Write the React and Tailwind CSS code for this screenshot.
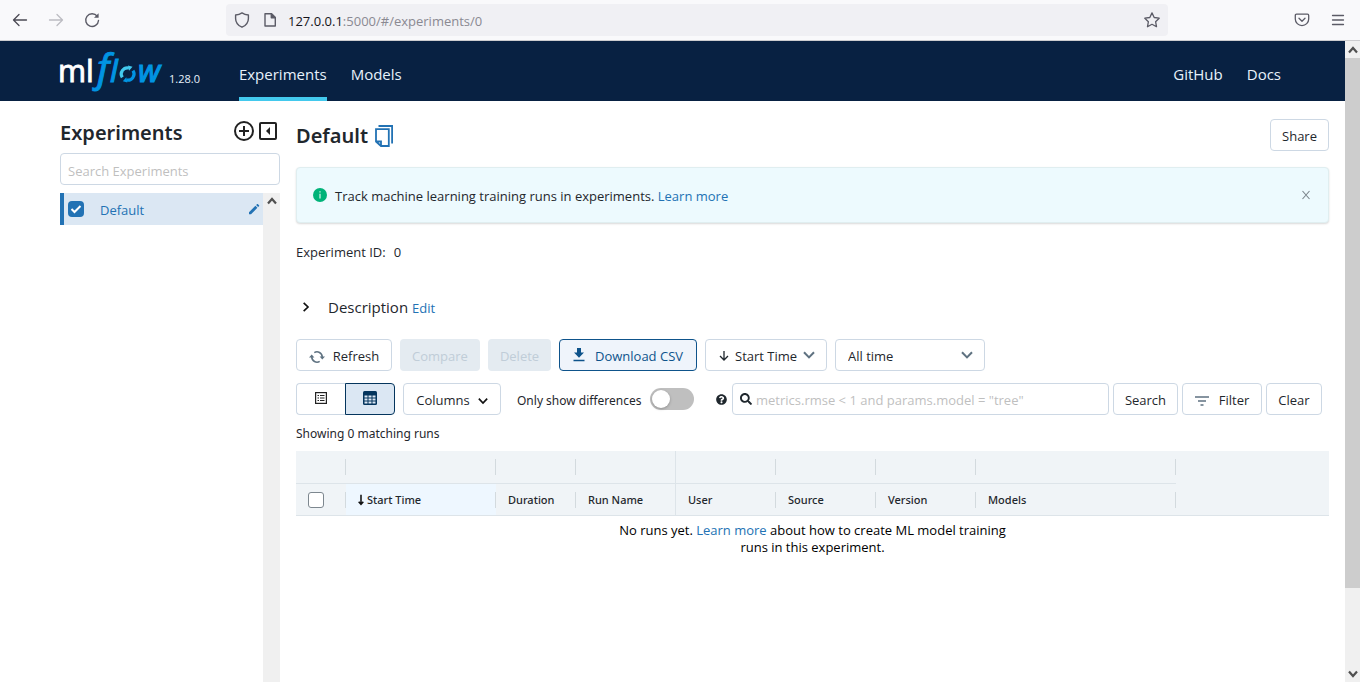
import React from "react";
import { FaQuestionCircle, FaSearch } from "react-icons/fa";

const BUTTON =
  "flex h-8 shrink-0 items-center justify-center rounded border border-[#cdd8e4] bg-white pt-[3px] text-[13px] text-[#1f272d]";

function Chevron({ className }) {
  return (
    <svg viewBox="0 0 12 12" fill="none" stroke="currentColor" className={className} aria-hidden="true">
      <path d="M1 3.2 6 8.4l5-5.2" strokeWidth="2" />
    </svg>
  );
}

function ScrollArrow({ down }) {
  return (
    <svg viewBox="0 0 10 8" className="h-2 w-[10px]" fill="none" stroke="#505050" strokeWidth="2.2" aria-hidden="true">
      <path d={down ? "M1 1.5 5 6l4-4.5" : "M1 6.5 5 2l4 4.5"} />
    </svg>
  );
}

function BrowserBar() {
  return (
    <div className="flex h-[41px] shrink-0 items-center border-b border-[#cccccf] bg-[#f9f9fb] text-[#5b5b66]">
      <div className="flex w-[226px] items-center gap-5 pl-3">
        <button aria-label="Back" className="text-[#4b4a54]">
          <svg viewBox="0 0 16 16" className="size-4" fill="none" stroke="currentColor" strokeWidth="1.3" strokeLinecap="round" strokeLinejoin="round">
            <path d="M14.5 8H1.5M7 2.5 1.5 8 7 13.5" />
          </svg>
        </button>
        <button aria-label="Forward" className="text-[#bcbcc2]">
          <svg viewBox="0 0 16 16" className="size-4" fill="none" stroke="currentColor" strokeWidth="1.3" strokeLinecap="round" strokeLinejoin="round">
            <path d="M1.5 8h13M9 2.5 14.5 8 9 13.5" />
          </svg>
        </button>
        <button aria-label="Reload">
          <svg viewBox="0 0 16 16" className="size-4" fill="none" stroke="currentColor" strokeWidth="1.4" strokeLinecap="round">
            <path d="M13.2 4.2A6.4 6.4 0 1 0 14.5 8.5" />
            <path d="M14.6 1.2v4.6H10z" fill="currentColor" stroke="none" />
          </svg>
        </button>
      </div>
      <div className="flex h-8 flex-1 items-center rounded bg-[#f0f0f4] px-2">
        <svg viewBox="0 0 16 16" className="size-4" fill="none" stroke="currentColor" strokeWidth="1.4" strokeLinejoin="round" aria-hidden="true">
          <path d="M8 .9c1.800 1.300 3.900 2 6.400 2.100v3.400c0 4-2.400 7-6.400 8.800C4 13.400 1.600 10.400 1.600 6.400V3C4.100 2.900 6.200 2.200 8 .9z" />
        </svg>
        <svg viewBox="0 0 16 16" className="ml-3 size-4" fill="none" stroke="currentColor" strokeWidth="1.4" strokeLinejoin="round" aria-hidden="true">
          <path d="M3 1.700h6.500L13.300 5.500V14H3z" />
          <path d="M9.300 1.700v4h4z" fill="currentColor" />
        </svg>
        <div className="ml-[10px] flex-1 pt-[3px] text-[13px]">
          <span className="text-[#15141a]">127.0.0.1</span>
          <span className="text-[#8a8992]">:5000/#/experiments/0</span>
        </div>
        <button aria-label="Bookmark this page">
          <svg viewBox="0 0 16 16" className="size-4" fill="none" stroke="currentColor" strokeWidth="1.3" strokeLinejoin="round">
            <path d="m8 .9 2.200 4.600 5 .7-3.600 3.500.9 5L8 12.300l-4.500 2.400.9-5L.8 6.200l5-.7z" />
          </svg>
        </button>
      </div>
      <div className="flex w-48 items-center justify-end gap-5 pr-[14px]">
        <button aria-label="Save to Pocket">
          <svg viewBox="0 0 16 16" className="size-4" fill="none" stroke="currentColor" strokeWidth="1.3" strokeLinecap="round" strokeLinejoin="round">
            <path d="M2.500 2.200h11c.7 0 1.200.5 1.200 1.200v3.500a6.700 6.700 0 0 1-13.400 0V3.400c0-.7.5-1.200 1.200-1.200zM5 6.300l3 2.900 3-2.900" />
          </svg>
        </button>
        <button aria-label="Open application menu">
          <svg viewBox="0 0 16 16" className="size-4" stroke="currentColor" strokeWidth="1.3" strokeLinecap="round">
            <path d="M2.500 3.500h11M2.500 8h11M2.500 12.500h11" />
          </svg>
        </button>
      </div>
    </div>
  );
}

function Logo() {
  return (
    <svg viewBox="-4 0 110 60" className="h-[60px] w-[110px]" role="img" aria-label="mlflow">
      <text x="-2" y="41" fill="#fff" stroke="#fff" strokeWidth=".8" fontFamily="Noto Sans" fontSize="30">ml</text>
      <g fill="#0194e2" stroke="#0194e2" fontStyle="italic" fontFamily="Noto Sans">
        <text x="37" y="41" fontSize="39" strokeWidth=".9">f</text>
        <text x="50" y="41" fontSize="30" strokeWidth="1.1">l</text>
        <text x="78" y="41" fontSize="31" strokeWidth="1.1">w</text>
      </g>
      <g fill="none" strokeWidth="3.200">
        <path d="M62.300 36.400a6.200 6.200 0 0 1 6.700-9.400" stroke="#43c9ed" />
        <path d="M73 29.600a6.200 6.200 0 0 1-6.700 9.400" stroke="#0194e2" />
      </g>
      <path d="m68 24.600 4.500 1.200-3.500 4z" fill="#43c9ed" />
      <path d="m67.300 41.400-4.500-1.200 3.500-4z" fill="#0194e2" />
    </svg>
  );
}

const NAV_LINK = "flex items-center border-b-4 pt-[11px]";

function Header() {
  return (
    <header className="flex h-[60px] shrink-0 items-center bg-[#082142] pr-16 pl-14 text-[15px] text-[#e7f1fb]">
      <Logo />
      <span className="ml-[3px] self-end pb-[14px] text-[11px] leading-4">1.28.0</span>
      <nav className="ml-[39px] flex h-full flex-1 items-stretch gap-6">
        <a href="#/experiments" className={NAV_LINK + " border-[#43c9ed]"}>Experiments</a>
        <a href="#/models" className={NAV_LINK + " border-transparent"}>Models</a>
        <a href="#github" className={NAV_LINK + " ml-auto border-transparent"}>GitHub</a>
        <a href="#docs" className={NAV_LINK + " border-transparent"}>Docs</a>
      </nav>
    </header>
  );
}

const TITLE = "font-['Noto_Sans',sans-serif] text-[20px] leading-[28px] font-semibold text-[#1f272d]";

function Sidebar() {
  return (
    <aside className="flex w-[220px] shrink-0 flex-col">
      <div className="flex h-[34px] items-start">
        <h1 className={TITLE + " flex-1"}>Experiments</h1>
        <div className="flex gap-1 pt-[2px] pr-[2px] text-[#222]">
          <button aria-label="New experiment">
            <svg viewBox="0 0 20 20" className="size-5" fill="none" stroke="currentColor" strokeWidth="2">
              <circle cx="10" cy="10" r="9" />
              <path d="M10 5v10M5 10h10" />
            </svg>
          </button>
          <button aria-label="Hide experiment list">
            <svg viewBox="0 0 20 20" className="size-5" fill="none" stroke="currentColor" strokeWidth="2">
              <rect x="2" y="2" width="16" height="16" rx="1" />
              <path d="M12 6v8l-4-4z" fill="currentColor" stroke="none" />
            </svg>
          </button>
        </div>
      </div>
      <input
        aria-label="Search Experiments"
        placeholder="Search Experiments"
        className="h-8 w-full shrink-0 rounded border border-[#cdd8e4] px-[7px] pt-[3px] text-[13px] outline-none placeholder:text-[#bfbfbf]"
      />
      <div className="mt-2 flex min-h-0 flex-1">
        <div className="flex-1">
          <div className="flex h-8 items-center border-l-4 border-[#2272b4] bg-[#dbe7f3] pr-[3px] pl-1 text-[13px] text-[#2272b4]">
            <label className="flex flex-1 items-center">
              <input type="checkbox" defaultChecked className="peer sr-only" />
              <span className="flex size-4 items-center justify-center rounded bg-[#2272b4]">
                <svg viewBox="0 0 12 12" className="size-3" fill="none" stroke="#fff" strokeWidth="2" aria-hidden="true">
                  <path d="m1.500 6 3 3L10.500 3" />
                </svg>
              </span>
              <span className="ml-4 pt-[3px]">Default</span>
            </label>
            <button aria-label="Rename experiment">
              <svg viewBox="0 0 12 12" className="size-3" fill="currentColor">
                <path d="M1 9.200 7.400 2.800l2 2L3 11.200H1zM8.100 2.100l.9-.9c.3-.3.700-.3 1 0l1 1c.3.3.3.700 0 1l-.9.9z" />
              </svg>
            </button>
          </div>
        </div>
        <div className="flex w-[17px] justify-center bg-[#f0f0f0] pt-1">
          <ScrollArrow />
        </div>
      </div>
    </aside>
  );
}

function TitleAndNotice() {
  return (
    <>
      <div className="flex items-center">
        <h2 className={TITLE + " pt-[2px]"}>Default</h2>
        <button aria-label="Copy experiment name" className="ml-[7px] pt-[2px] text-[#2272b4]">
          <svg viewBox="0 0 18 22" className="h-[22px] w-[18px]" fill="none" stroke="currentColor" strokeWidth="1.800">
            <path d="M3.500 1h13.600v17.500" />
            <path d="M1 4.200h12.800V21H6L1 16.500zM1 16.500h5V21" />
          </svg>
        </button>
        <button className={BUTTON + " ml-auto w-[59px]"}>Share</button>
      </div>
      <div role="status" className="mt-4 flex h-14 items-center rounded border border-[#e0eef0] bg-[#edfafe] px-4 text-[13px] text-[#1f272d] shadow-[0_1px_2px_rgba(0,0,0,0.15)]">
        <svg viewBox="0 0 14 14" className="size-[14px]" aria-hidden="true">
          <circle cx="7" cy="7" r="7" fill="#00b379" />
          <path d="M7 3.200v1.300M7 5.800v4.800" stroke="#d7f7ec" strokeWidth="1.200" />
        </svg>
        <p className="ml-2 flex-1 pt-[3px]">
          Track machine learning training runs in experiments.{" "}
          <a href="#learn" className="text-[#2272b4]">Learn more</a>
        </p>
        <button aria-label="Close" className="mr-px text-[#7b858c]">
          <svg viewBox="0 0 10 10" className="size-[10px]" stroke="currentColor" strokeWidth="1.100">
            <path d="m1.500 1 7 8M8.500 1l-7 8" />
          </svg>
        </button>
      </div>
      <p className="mt-5 flex gap-2 text-[13px] leading-[18px] text-[#1f272d]">
        <span>Experiment ID:</span>
        <span>0</span>
      </p>
      <div className="mt-[34px] flex h-6 items-center pl-[5px]">
        <button aria-label="Expand description">
          <Chevron className="size-[10px] -rotate-90 text-[#111]" />
        </button>
        <h3 className="ml-[17px] text-[15px] text-[#1f272d]">Description</h3>
        <button className="ml-1 pt-[3px] text-[13px] text-[#2272b4]">Edit</button>
      </div>
    </>
  );
}

const SELECT =
  "h-8 w-full appearance-none rounded border border-[#cdd8e4] bg-white pt-[3px] text-[13px] text-[#1f272d]";

function ActionBar() {
  return (
    <div className="mt-5 flex gap-2">
      <button className={BUTTON + " w-24 gap-2"}>
        <svg viewBox="0 0 16 16" className="size-4" fill="none" stroke="#5f7281" strokeWidth="1.600" aria-hidden="true">
          <path d="M5.300 3.600A5.200 5.200 0 0 1 13.200 8M10.700 12.400A5.200 5.200 0 0 1 2.800 8" />
          <path d="M10.600 7.500H16L13.300 10.600zM0 8.500h5.400L2.700 5.400z" fill="#5f7281" stroke="none" />
        </svg>
        Refresh
      </button>
      <button disabled className="h-8 w-20 rounded bg-[#e4ebf1] pt-[3px] text-[13px] text-[#c0cdd8]">Compare</button>
      <button disabled className="h-8 w-[63px] rounded bg-[#e4ebf1] pt-[3px] text-[13px] text-[#c0cdd8]">Delete</button>
      <button className="flex h-8 w-[138px] items-center justify-center gap-[10px] rounded border border-[#0e538b] bg-[#eff4fb] text-[13px] text-[#0e538b]">
        <svg viewBox="0 0 12 14" className="h-[14px] w-3" fill="currentColor" aria-hidden="true">
          <path d="M4 0h4v4.500h3L6 9.800 1 4.500h3zM.5 11.800h11v1.500H.5z" />
        </svg>
        <span className="pt-[3px]">Download CSV</span>
      </button>
      <div className="relative w-[122px]">
        <select aria-label="Sort by" className={SELECT + " pl-[29px]"}>
          <option>Start Time</option>
        </select>
        <svg viewBox="0 0 10 10" className="pointer-events-none absolute top-3 left-[14px] size-[10px]" fill="none" stroke="#1f272d" strokeWidth="1.300" aria-hidden="true">
          <path d="M5 0v9M1 5l4 4 4-4" />
        </svg>
        <Chevron className="pointer-events-none absolute top-[10px] right-3 size-3 text-[#5f7281]" />
      </div>
      <div className="relative w-[150px]">
        <select aria-label="Time range" className={SELECT + " pl-3"}>
          <option>All time</option>
        </select>
        <Chevron className="pointer-events-none absolute top-[10px] right-3 size-3 text-[#5f7281]" />
      </div>
    </div>
  );
}

function SearchBar() {
  return (
    <div className="mt-3 flex items-center pr-[7px] text-[13px] text-[#1f272d]">
      <div className="flex">
        <button aria-label="List view" className="flex h-8 w-[49px] items-center justify-center rounded-l border border-r-0 border-[#cdd8e4] pb-[2px]">
          <svg viewBox="0 0 12 12" className="size-3" fill="none" stroke="#222" aria-hidden="true">
            <rect x=".6" y=".6" width="10.800" height="10.800" strokeWidth="1.200" />
            <path d="M2.500 3.500H4M2.500 6H4M2.500 8.500H4M5 3.500h4.500M5 6h4.500M5 8.500h4.500" strokeWidth="1.200" />
          </svg>
        </button>
        <button aria-label="Grid view" className="flex h-8 w-[50px] items-center justify-center rounded-r border border-[#04355d] bg-[#dbe7f3] pb-[2px]">
          <svg viewBox="0 0 14 14" className="size-[14px]" aria-hidden="true">
            <rect width="14" height="14" rx="1.500" fill="#04355d" />
            <path d="M1.500 4.500h3v2h-3zM5.500 4.500h3v2h-3zM9.500 4.500h3v2h-3zM1.500 7.500h3v2h-3zM5.500 7.500h3v2h-3zM9.500 7.500h3v2h-3zM1.500 10.500h3v2h-3zM5.500 10.500h3v2h-3zM9.500 10.500h3v2h-3z" fill="#dbe7f3" />
          </svg>
        </button>
      </div>
      <button className={BUTTON + " ml-2 w-[98px] gap-2"}>
        Columns
        <Chevron className="size-[10px] text-[#111]" />
      </button>
      <label htmlFor="diff" className="ml-4 w-[133px] pt-[3px] font-['Noto_Sans',sans-serif] text-xs whitespace-nowrap">Only show differences</label>
      <button id="diff" role="switch" aria-checked="false" aria-label="Only show differences" className="flex h-[22px] w-11 shrink-0 items-center rounded-full bg-[#bfbfbf] px-[2px]">
        <span className="size-[18px] rounded-full bg-white shadow-[0_1px_3px_rgba(0,0,0,0.25)]" />
      </button>
      <FaQuestionCircle className="ml-[22px] size-[11px] shrink-0" />
      <label className="ml-[5px] flex h-8 min-w-0 flex-1 items-center rounded border border-[#cdd8e4] pl-[7px]">
        <FaSearch className="size-3 shrink-0" />
        <input
          aria-label="Search runs"
          placeholder={'metrics.rmse < 1 and params.model = "tree"'}
          className="ml-1 min-w-0 flex-1 pt-[3px] outline-none placeholder:text-[#bfbfbf]"
        />
      </label>
      <button className={BUTTON + " ml-1 w-[65px]"}>Search</button>
      <button className={BUTTON + " ml-1 w-20 gap-[10px]"}>
        <svg viewBox="0 0 14 10" className="h-[10px] w-[14px]" stroke="#5f7281" strokeWidth="1.500" aria-hidden="true">
          <path d="M0 1h14M3 5h8M5.500 9h3" />
        </svg>
        Filter
      </button>
      <button className={BUTTON + " ml-1 w-14"}>Clear</button>
    </div>
  );
}

const COLUMNS = [
  { name: "Start Time", sorted: true },
  { name: "Duration" },
  { name: "Run Name", edge: true },
  { name: "User" },
  { name: "Source" },
  { name: "Version" },
  { name: "Models" },
];

function Divider() {
  return <span className="h-4 w-px bg-[#d3dade]" />;
}

function RunsTable() {
  return (
    <>
      <table className="mt-2 w-full table-fixed border-collapse bg-[#f0f4f7] font-['Noto_Sans',sans-serif] text-[11px] text-[#1f272d]">
        <colgroup>
          <col className="w-[50px]" />
          <col className="w-[150px]" />
          <col className="w-20" />
          <col className="w-[100px]" />
          <col className="w-[100px]" />
          <col className="w-[100px]" />
          <col className="w-[100px]" />
          <col className="w-[200px]" />
          <col />
        </colgroup>
        <thead>
          <tr className="h-8">
            <td className="border-b border-[#dde4e9] p-0"><div className="flex justify-end"><Divider /></div></td>
            {COLUMNS.map((c) => (
              <td key={c.name} className="border-b border-[#dde4e9] p-0">
                <div className="flex h-8 items-center justify-end">
                  {c.edge ? <span className="h-full w-px bg-[#dde4e9]" /> : <Divider />}
                </div>
              </td>
            ))}
            <td className="p-0" />
          </tr>
          <tr className="h-8 border-b border-[#dde4e9]">
            <th className="p-0">
              <div className="flex items-center justify-between pl-3">
                <input type="checkbox" aria-label="Select all runs" className="size-4 appearance-none rounded-[3px] border border-[#7d878f] bg-white" />
                <Divider />
              </div>
            </th>
            {COLUMNS.map((c) => (
              <th key={c.name} className={c.sorted ? "bg-[#eef7ff] p-0 font-medium" : "p-0 font-medium"}>
                <div className="flex h-[31px] items-center pl-3">
                  {c.sorted && (
                    <svg viewBox="0 0 7 12" className="mr-[3px] h-3 w-[6px]" fill="none" stroke="#111" strokeWidth="1.800" aria-hidden="true">
                      <path d="M3.500 0v11M.8 8l2.700 3 2.700-3" />
                    </svg>
                  )}
                  <span className="mr-auto pt-[2px]">{c.name}</span>
                  {c.edge ? <span className="h-full w-px bg-[#dde4e9]" /> : <Divider />}
                </div>
              </th>
            ))}
            <td className="p-0" />
          </tr>
        </thead>
      </table>
      <p className="mx-auto mt-[6px] w-[400px] text-center text-[13px] leading-[17px] text-black">
        No runs yet. <a href="#learn-runs" className="text-[#2272b4]">Learn more</a> about how to create ML model training runs in this experiment.
      </p>
    </>
  );
}

export default function App() {
  return (
    <div className="flex h-screen flex-col overflow-hidden bg-white font-['Open_Sans',sans-serif]">
      <BrowserBar />
      <div className="flex min-h-0 flex-1">
        <div className="flex min-w-0 flex-1 flex-col">
          <Header />
          <div className="flex min-h-0 flex-1 gap-4 pt-[18px] pr-4 pl-[60px]">
            <Sidebar />
            <main className="min-w-0 flex-1">
              <TitleAndNotice />
              <ActionBar />
              <SearchBar />
              <p className="mt-[10px] font-['Noto_Sans',sans-serif] text-xs leading-[18px] text-[#1f272d]">Showing 0 matching runs</p>
              <RunsTable />
            </main>
          </div>
        </div>
        <div className="flex w-[15px] shrink-0 flex-col items-center bg-[#f0f0f0]">
          <div className="flex h-[17px] shrink-0 items-center"><ScrollArrow /></div>
          <div className="h-[530px] w-full bg-[#cdcdcd]" />
          <div className="mt-auto flex h-[17px] shrink-0 items-center"><ScrollArrow down /></div>
        </div>
      </div>
    </div>
  );
}
